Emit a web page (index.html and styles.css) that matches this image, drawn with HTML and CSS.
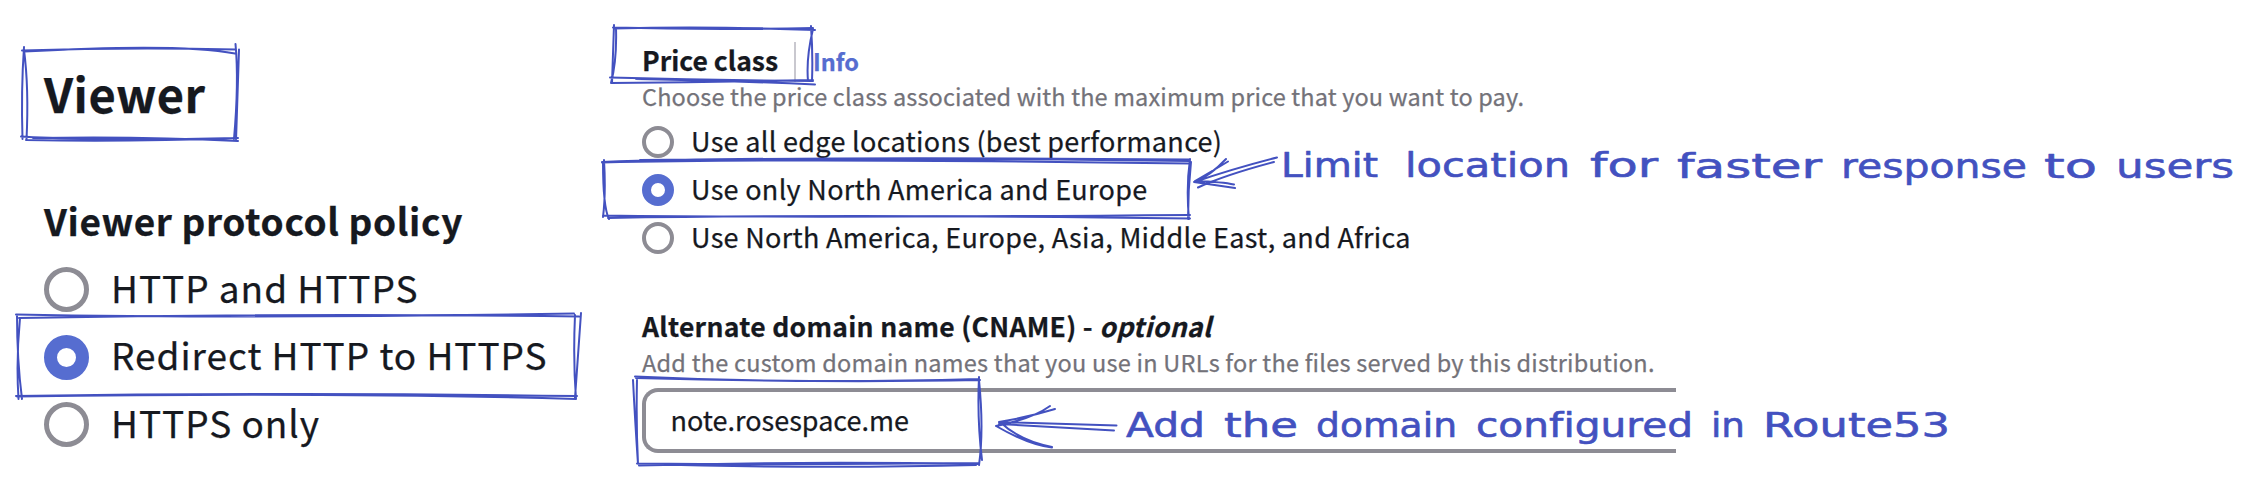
FILE: index.html
```html
<!DOCTYPE html>
<html lang="en">
<head>
<meta charset="utf-8">
<title>Distribution settings</title>
<link rel="stylesheet" href="styles.css">
</head>
<body>
<main class="board">
  <section class="viewer">
    <h1 class="viewer-title"><span>Viewer</span></h1>
    <h2 class="viewer-subtitle"><span>Viewer protocol policy</span></h2>
    <div class="options large">
      <div class="option"><i class="radio"></i><span>HTTP and HTTPS</span></div>
      <div class="option"><i class="radio checked"></i><span>Redirect HTTP to HTTPS</span></div>
      <div class="option"><i class="radio"></i><span>HTTPS only</span></div>
    </div>
  </section>
  <section class="settings">
    <div class="heading-row"><h3 class="label price">Price class</h3><a class="info">Info</a></div>
    <p class="hint hint-price"><span>Choose the price class associated with the maximum price that you want to pay.</span></p>
    <div class="options">
      <div class="option"><i class="radio"></i><span>Use all edge locations (best performance)</span></div>
      <div class="option"><i class="radio checked"></i><span>Use only North America and Europe</span></div>
      <div class="option"><i class="radio"></i><span>Use North America, Europe, Asia, Middle East, and Africa</span></div>
    </div>
    <h3 class="label cname"><span>Alternate domain name (CNAME) - <em>optional</em></span></h3>
    <p class="hint hint-cname"><span>Add the custom domain names that you use in URLs for the files served by this distribution.</span></p>
    <div class="field"><span>note.rosespace.me</span></div>
  </section>
  <svg class="notes" width="2266" height="488" viewBox="0 0 2266 488">
    <g class="ink">
      <path d="M22 50.500Q130 47 236 49.500M24 51.500Q180 43 235 53.500M24 47Q21 90 22.500 139M24 50Q29 88 26.500 140M235.500 44Q239 82 234 139M239 49.500Q237 105 236 141M21 136.500Q100 141 238 138M26 140Q128 142 238 138M33 138Q140 136 238 141"/>
      <path d="M16 314.500Q260 319 574 313.500M19 318Q300 313 579 316.500M17 315Q17 360 22 399M20 318Q16 360 18.500 399M575 315Q573 360 576 399M581 313Q578 358 575 398M16 396Q300 392 577 396M17 396.500Q330 392 576 399"/>
      <path d="M613 27.500Q710 30 813 28M614 28.500Q710 26 815 30M614 25Q613 52 612 83M616 28Q617 60 611 83M811 26Q813 54 812 81M813 29Q806 58 808 81M610 77.500Q710 80 813 81M611 83Q710 82 813 80M636 79Q740 81 815 84.500"/>
      <path d="M602 162Q780 156 1190 159.500M602 162.500Q800 158 1190 163.500M640 160Q850 157 1190 161M604 160Q606 193 603 217M603 162Q603 207 609 219M1190 159Q1186 188 1189 219M1191 162Q1188 190 1188 219M603 215.500Q800 218 1190 215M608 218Q850 214 1190 218.500"/>
      <path d="M635 376.500Q790 384 979 379M636 378Q825 383 980 380M633 380Q635 420 638 464M637 379Q636 424 638 464M979 377Q977 420 982 460M979 380Q984 430 979 465M637 463.500Q810 465 979 463M639 465.500Q800 461 979 464M639 464Q820 469 976 465"/>
      <path d="M1277 157.500Q1232 169 1194.500 182M1274 162Q1225 175 1198 187.500M1194.500 182Q1210 176 1226 159M1195 181Q1214 170 1228 161.500M1194 182L1235 188M1195 181Q1223 182 1234 184.500"/>
      <path d="M1116.500 425.500L999 422M1114 430.500L999 424M996 426Q1032 419 1050 406M999 422Q1029 417 1055 409M996 426Q1029 445 1052 447.500M1000 422Q1020 441 1052 447"/>
    </g>
    <g class="hand">
      <text x="1281" y="177" textLength="97" lengthAdjust="spacingAndGlyphs">Limit</text>
      <text x="1405" y="177" textLength="165" lengthAdjust="spacingAndGlyphs">location</text>
      <text x="1590" y="177" textLength="68" lengthAdjust="spacingAndGlyphs">for</text>
      <text x="1677" y="178" textLength="145" lengthAdjust="spacingAndGlyphs">faster</text>
      <text x="1841" y="178" textLength="186" lengthAdjust="spacingAndGlyphs">response</text>
      <text x="2044" y="178" textLength="53" lengthAdjust="spacingAndGlyphs">to</text>
      <text x="2116" y="178" textLength="118" lengthAdjust="spacingAndGlyphs">users</text>
      <text x="1126" y="436.500" textLength="79" lengthAdjust="spacingAndGlyphs">Add</text>
      <text x="1224" y="436.500" textLength="74" lengthAdjust="spacingAndGlyphs">the</text>
      <text x="1316" y="436.500" textLength="141" lengthAdjust="spacingAndGlyphs">domain</text>
      <text x="1476" y="436.500" textLength="217" lengthAdjust="spacingAndGlyphs">configured</text>
      <text x="1711" y="436.500" textLength="34" lengthAdjust="spacingAndGlyphs">in</text>
      <text x="1763" y="436.500" textLength="187" lengthAdjust="spacingAndGlyphs">Route53</text>
    </g>
  </svg>
</main>
</body>
</html>
```
FILE: styles.css
```css
body {
  margin: 0;
  background: #fff;
  color: #16191f;
  font-family: "Noto Sans CJK SC", "Open Sans", sans-serif;
  -webkit-text-stroke: 0.25px;
}
h1, h2, h3, p { margin: 0; white-space: nowrap; }
.board {
  position: relative;
  display: flex;
  width: 2266px;
  height: 488px;
  overflow: hidden;
}
.viewer {
  box-sizing: border-box;
  width: 642px;
  padding: 63px 0 0 44px;
}
.viewer-title { font-size: 47px; line-height: 60px; letter-spacing: 0.5px; }
.viewer-subtitle { margin-top: 72.5px; font-size: 37px; line-height: 48px; letter-spacing: 0.63px; }
.option {
  display: flex;
  align-items: center;
  height: 48px;
  gap: 17px;
  white-space: nowrap;
  font-size: 27px;
  line-height: 40px;
  letter-spacing: 0.3px;
}
.option span { padding-bottom: 3px; }
.large { margin-top: 12.5px; }
.large .option { height: 67.5px; gap: 22px; font-size: 37px; line-height: 50px; letter-spacing: 0.97px; }
.large .option span { padding-bottom: 6px; }
.radio {
  box-sizing: border-box;
  flex: none;
  width: 32px;
  height: 32px;
  border: 4px solid #8d8c94;
  border-radius: 50%;
}
.radio.checked { border: 9.5px solid #566dd0; }
.large .radio { width: 45px; height: 45px; border-width: 5px; }
.large .radio.checked { border-width: 13.5px; }
.settings { padding-top: 42px; }
.heading-row { display: flex; height: 37.5px; }
.label { font-size: 26.5px; line-height: 36px; letter-spacing: 0.3px; }
.price { box-sizing: border-box; width: 154px; height: 40px; border-right: 2px solid #c9c8cf; letter-spacing: 0; }
.info { padding-left: 17px; color: #566dd0; font-size: 23.5px; font-weight: 700; line-height: 38px; }
.hint { color: #737279; font-size: 23.5px; line-height: 32px; letter-spacing: 0.15px; }
.settings .options { margin: 6.5px 0 0 0; }
.cname { margin-top: 45.5px; }
.hint-cname { margin-top: 2px; letter-spacing: 0.24px; }
.field {
  box-sizing: border-box;
  width: 1034px;
  height: 65px;
  margin-top: 10px;
  padding-left: 24.5px;
  border: 4px solid #8d8c94;
  border-right: 0;
  border-radius: 16px 0 0 16px;
  font-size: 27px;
  line-height: 55px;
}
.notes { position: absolute; top: 0; left: 0; }
.ink { fill: none; stroke: #4351c0; stroke-width: 2; stroke-linecap: round; }
.hand text {
  fill: #4351c0;
  stroke: #4351c0;
  stroke-width: 0.6;
  stroke-linejoin: round;
  font-family: "DejaVu Sans", sans-serif;
  font-size: 34px;
  font-variant-ligatures: none;
  -webkit-text-stroke: 0.4px;
}
```
